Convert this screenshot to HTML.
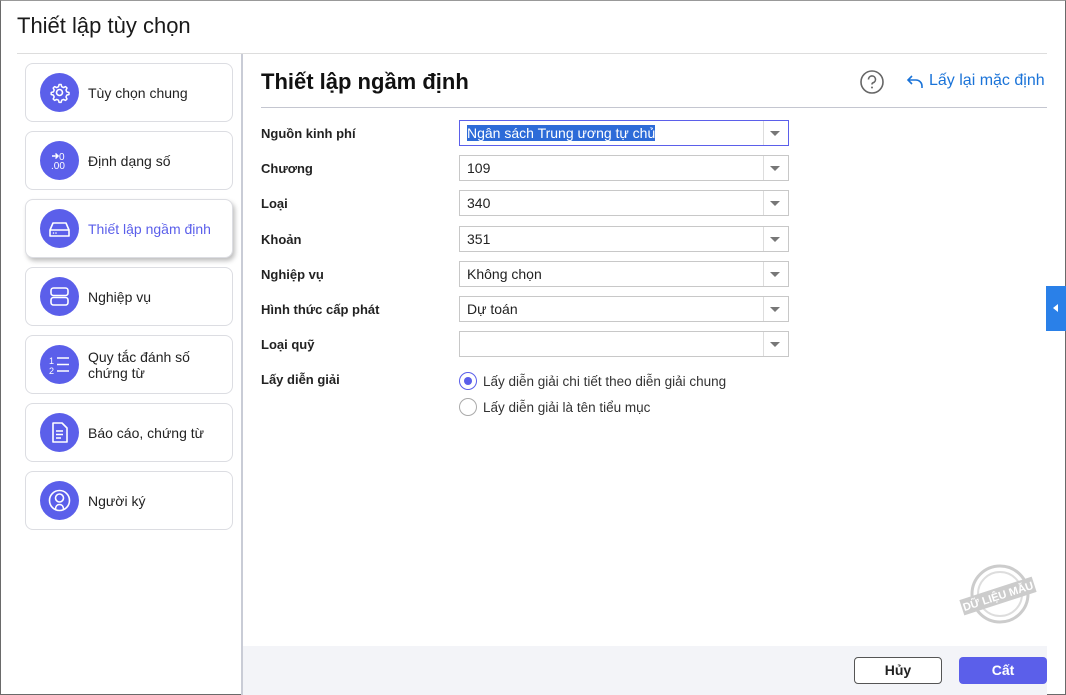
<!DOCTYPE html>
<html><head><meta charset="utf-8"><style>
*{box-sizing:border-box;margin:0;padding:0}
body{width:1066px;height:695px;overflow:hidden;background:#fff;font-family:"Liberation Sans",Arial,sans-serif;color:#222;position:relative}
.win{position:absolute;left:0;top:0;width:1066px;height:695px;border:1px solid #6a6a6a;border-top-color:#999}
.t{position:absolute;left:17px;top:13px;font-size:22px;color:#1a1a1a}
.hl{position:absolute;left:17px;top:53px;width:1030px;height:1px;background:#ddd}
.vl{position:absolute;left:241px;top:54px;width:2px;height:641px;background:#c9ccd6}
.card{position:absolute;left:25px;width:208px;height:59px;border:1px solid #dcdde2;border-radius:8px;background:#fff}
.card.sel{box-shadow:2px 3px 5px rgba(0,0,0,.25)}
.ic{position:absolute;left:14px;top:9px;width:39px;height:39px;border-radius:50%;background:#5b5fea}
.ic svg{position:absolute;left:0;top:0}
.ct{position:absolute;left:62px;top:0;height:57px;display:flex;align-items:center;font-size:14px;line-height:16px;color:#222}
.sel .ct{color:#5b5fea}
h2{position:absolute;left:261px;top:69px;font-size:22px;font-weight:bold;color:#111}
.hl2{position:absolute;left:261px;top:107px;width:786px;height:1px;background:#c4c6d0}
.lbl{position:absolute;left:261px;font-size:13px;font-weight:bold;color:#222}
.sb{position:absolute;left:459px;width:330px;height:26px;border:1px solid #c8c8c8;background:#fff;font-size:14px;padding-left:7px;line-height:24px}
.sb:after{content:"";position:absolute;right:8px;top:10px;border:5px solid transparent;border-top:5px solid #777;border-bottom:0}
.sb:before{content:"";position:absolute;right:24px;top:0;width:1px;height:24px;background:#ddd}
.sb.f{border-color:#5b5fea}
.hi{background:#2d6bd8;color:#fff}
.rd{position:absolute;left:459px;width:18px;height:18px;border-radius:50%;border:1px solid #aaa;background:#fff}
.rd.on{border-color:#5b5fea}
.rd.on:after{content:"";position:absolute;left:4px;top:4px;width:8px;height:8px;border-radius:50%;background:#5b5fea}
.rt{position:absolute;left:483px;font-size:13.5px;color:#333}
.foot{position:absolute;left:243px;top:646px;width:804px;height:49px;background:#f3f4f8}
.btn{position:absolute;top:657px;width:88px;height:27px;border-radius:4px;font-size:14px;font-weight:bold;text-align:center;line-height:25px}
</style></head><body>
<div class="win"></div>
<div class="t">Thiết lập tùy chọn</div>
<div class="hl"></div>
<div class="vl"></div>

<div class="card" style="top:63px"><div class="ic"><svg width="39" height="39" viewBox="0 0 39 39"><circle cx="19.5" cy="19.5" r="3" fill="none" stroke="#fff" stroke-width="1.6"/><path d="M19.5 11.5l1.6 0 .6 2.2 1.8.9 2.1-1 1.4 1.4-1 2.1.8 1.8 2.2.6v2l-2.2.6-.8 1.8 1 2.1-1.4 1.4-2.1-1-1.8.8-.6 2.2h-2l-.6-2.2-1.8-.8-2.1 1-1.4-1.4 1-2.1-.8-1.8-2.2-.6v-2l2.2-.6.8-1.8-1-2.1 1.4-1.4 2.1 1 1.8-.9.6-2.2z" fill="none" stroke="#fff" stroke-width="1.5" stroke-linejoin="round"/></svg></div><div class="ct">Tùy chọn chung</div></div>

<div class="card" style="top:131px"><div class="ic"><svg width="39" height="39" viewBox="0 0 39 39"><path d="M12 15h6M15.5 12.5l2.5 2.5-2.5 2.5" fill="none" stroke="#fff" stroke-width="1.5"/><text x="19" y="19" font-size="10" fill="#fff" font-family="Liberation Sans">0</text><text x="11" y="28" font-size="10" fill="#fff" font-family="Liberation Sans">.00</text></svg></div><div class="ct">Định dạng số</div></div>

<div class="card sel" style="top:199px"><div class="ic"><svg width="39" height="39" viewBox="0 0 39 39"><path d="M10 21l3-7h13l3 7v6H10z M10 21h19" fill="none" stroke="#fff" stroke-width="1.6" stroke-linejoin="round"/><circle cx="13.5" cy="24" r=".8" fill="#fff"/><circle cx="16" cy="24" r=".8" fill="#fff"/></svg></div><div class="ct">Thiết lập ngầm định</div></div>

<div class="card" style="top:267px"><div class="ic"><svg width="39" height="39" viewBox="0 0 39 39"><rect x="11" y="11" width="17" height="7.5" rx="2.5" fill="none" stroke="#fff" stroke-width="1.6"/><rect x="11" y="20.5" width="17" height="7.5" rx="2.5" fill="none" stroke="#fff" stroke-width="1.6"/></svg></div><div class="ct">Nghiệp vụ</div></div>

<div class="card" style="top:335px"><div class="ic"><svg width="39" height="39" viewBox="0 0 39 39"><text x="9" y="19" font-size="9" fill="#fff" font-family="Liberation Sans">1</text><text x="9" y="29" font-size="9" fill="#fff" font-family="Liberation Sans">2</text><path d="M17 13h12M17 19.5h12M17 26h12" stroke="#fff" stroke-width="1.6"/></svg></div><div class="ct">Quy tắc đánh số<br>chứng từ</div></div>

<div class="card" style="top:403px"><div class="ic"><svg width="39" height="39" viewBox="0 0 39 39"><path d="M13 10h9l5 5v14H13z" fill="none" stroke="#fff" stroke-width="1.6" stroke-linejoin="round"/><path d="M16 18h7M16 21.5h7M16 25h5" stroke="#fff" stroke-width="1.4"/></svg></div><div class="ct">Báo cáo, chứng từ</div></div>

<div class="card" style="top:471px"><div class="ic"><svg width="39" height="39" viewBox="0 0 39 39"><circle cx="19.5" cy="19.5" r="10" fill="none" stroke="#fff" stroke-width="1.6"/><circle cx="19.5" cy="17" r="4" fill="none" stroke="#fff" stroke-width="1.6"/><path d="M15.5 28.5c0-3 1.5-5 4-5s4 2 4 5" fill="none" stroke="#fff" stroke-width="1.6"/></svg></div><div class="ct">Người ký</div></div>

<h2>Thiết lập ngầm định</h2>
<svg style="position:absolute;left:859px;top:69px" width="26" height="26" viewBox="0 0 26 26"><circle cx="13" cy="13" r="11" fill="none" stroke="#666" stroke-width="1.6"/><path d="M9.5 10.5a3.5 3.5 0 1 1 4.5 3.3c-.8.3-1 .9-1 1.7" fill="none" stroke="#666" stroke-width="1.6"/><circle cx="13" cy="18.5" r="1" fill="#666"/></svg>
<svg style="position:absolute;left:906px;top:74px" width="18" height="16" viewBox="0 0 18 16"><path d="M6 2L2 6l4 4M2 6h8a6 6 0 0 1 6 6v2" fill="none" stroke="#1a73d8" stroke-width="1.6"/></svg>
<div style="position:absolute;left:929px;top:72px;font-size:16px;color:#1a73d8">Lấy lại mặc định</div>
<div class="hl2"></div>

<div class="lbl" style="top:126px">Nguồn kinh phí</div>
<div class="sb f" style="top:120px"><span class="hi">Ngân sách Trung ương tự chủ</span></div>
<div class="lbl" style="top:161px">Chương</div><div class="sb" style="top:155px">109</div>
<div class="lbl" style="top:196px">Loại</div><div class="sb" style="top:190px">340</div>
<div class="lbl" style="top:232px">Khoản</div><div class="sb" style="top:226px">351</div>
<div class="lbl" style="top:267px">Nghiệp vụ</div><div class="sb" style="top:261px">Không chọn</div>
<div class="lbl" style="top:302px">Hình thức cấp phát</div><div class="sb" style="top:296px">Dự toán</div>
<div class="lbl" style="top:337px">Loại quỹ</div><div class="sb" style="top:331px"></div>
<div class="lbl" style="top:372px">Lấy diễn giải</div>
<div class="rd on" style="top:372px"></div><div class="rt" style="top:374px">Lấy diễn giải chi tiết theo diễn giải chung</div>
<div class="rd" style="top:398px"></div><div class="rt" style="top:400px">Lấy diễn giải là tên tiểu mục</div>

<div style="position:absolute;left:1046px;top:286px;width:20px;height:45px;background:#2a80e8"></div>
<div style="position:absolute;left:1053px;top:304px;border:4px solid transparent;border-right:5px solid #fff;border-left:0"></div>

<svg style="position:absolute;left:958px;top:562px" width="80" height="66" viewBox="0 0 80 66"><circle cx="42" cy="32" r="28" fill="none" stroke="#ccc" stroke-width="3"/><circle cx="42" cy="32" r="22" fill="none" stroke="#ddd" stroke-width="2"/><g transform="rotate(-18 40 34)"><rect x="2" y="26" width="76" height="16" fill="#ccc"/><text x="40" y="38" font-size="11" font-weight="bold" fill="#fff" text-anchor="middle" font-family="Liberation Sans">DỮ LIỆU MẪU</text></g></svg>

<div class="foot"></div>
<div class="btn" style="left:854px;border:1px solid #555;background:#fff;color:#222">Hủy</div>
<div class="btn" style="left:959px;background:#5b5fea;color:#fff;line-height:27px">Cất</div>
</body></html>
